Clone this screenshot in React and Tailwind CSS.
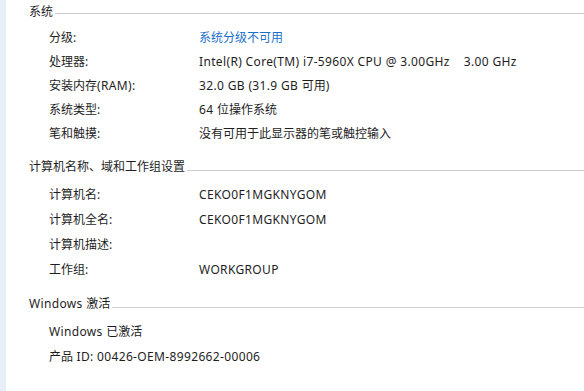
import React from 'react';

const font = { fontFamily: '"Noto Sans", "Noto Sans CJK SC", sans-serif' };

// Latin runs in the original are a little wider than Noto Sans, so they get tracking
const Latin = ({ children }) => <span className="tracking-[0.35px]">{children}</span>;

const Header = ({ title, className = '', lineClass = 'mt-[6px]' }) => (
  <div className={`flex items-center h-6 pl-[29px] ${className}`}>
    <span className="text-[12px] text-[#1e1e1e] leading-none whitespace-nowrap">{title}</span>
    <div className={`flex-1 h-px bg-[#cfcfcf] ml-[2px] ${lineClass}`} />
  </div>
);

const Row = ({ label, value, link, h = 'h-6' }) => (
  <div className={`flex items-center ${h} pl-[49px] text-[12px] text-[#1e1e1e] leading-none`}>
    <span className="w-[150px] shrink-0 whitespace-nowrap">{label}</span>
    <span className={`whitespace-pre ${link ? 'text-[#1a6fc9]' : ''}`}>{value}</span>
  </div>
);

export default function App() {
  return (
    <div className="w-[584px] h-[391px] flex bg-white overflow-hidden" style={font}>
      <div className="w-[6px] shrink-0 bg-[#e8eff9]" />
      <div className="flex-1 -ml-[6px] flex flex-col">
        <Header title="系统" lineClass="mt-[3px]" />
        <div className="mt-[2px]">
          <Row label="分级:" value="系统分级不可用" link />
          <Row label="处理器:" value={<Latin>{'Intel(R) Core(TM) i7-5960X CPU @ 3.00GHz    3.00 GHz'}</Latin>} />
          <Row label={<>安装内存<Latin>(RAM):</Latin></>} value={<><Latin>32.0 GB (31.9 GB </Latin>可用<Latin>)</Latin></>} />
          <Row label="系统类型:" value={<><Latin>64 </Latin>位操作系统</>} />
          <Row label="笔和触摸:" value="没有可用于此显示器的笔或触控输入" />
        </div>

        <Header title="计算机名称、域和工作组设置" className="mt-[9px]" />
        <div className="mt-[3px]">
          <Row h="h-[25px]" label="计算机名:" value={<Latin>CEKO0F1MGKNYGOM</Latin>} />
          <Row h="h-[25px]" label="计算机全名:" value={<Latin>CEKO0F1MGKNYGOM</Latin>} />
          <Row h="h-[25px]" label="计算机描述:" value="" />
          <Row h="h-[25px]" label="工作组:" value={<Latin>WORKGROUP</Latin>} />
        </div>

        <Header title={<><Latin>Windows </Latin>激活</>} className="mt-[10px]" />
        <div className="mt-[3px]">
          <div className="flex items-center h-[25px] pl-[49px] text-[12px] text-[#1e1e1e] leading-none whitespace-pre">
            <Latin>Windows </Latin>已激活
          </div>
          <div className="flex items-center h-[25px] pl-[49px] text-[12px] text-[#1e1e1e] leading-none whitespace-pre">
            产品<Latin> ID: 00426-OEM-8992662-00006</Latin>
          </div>
        </div>
      </div>
    </div>
  );
}
